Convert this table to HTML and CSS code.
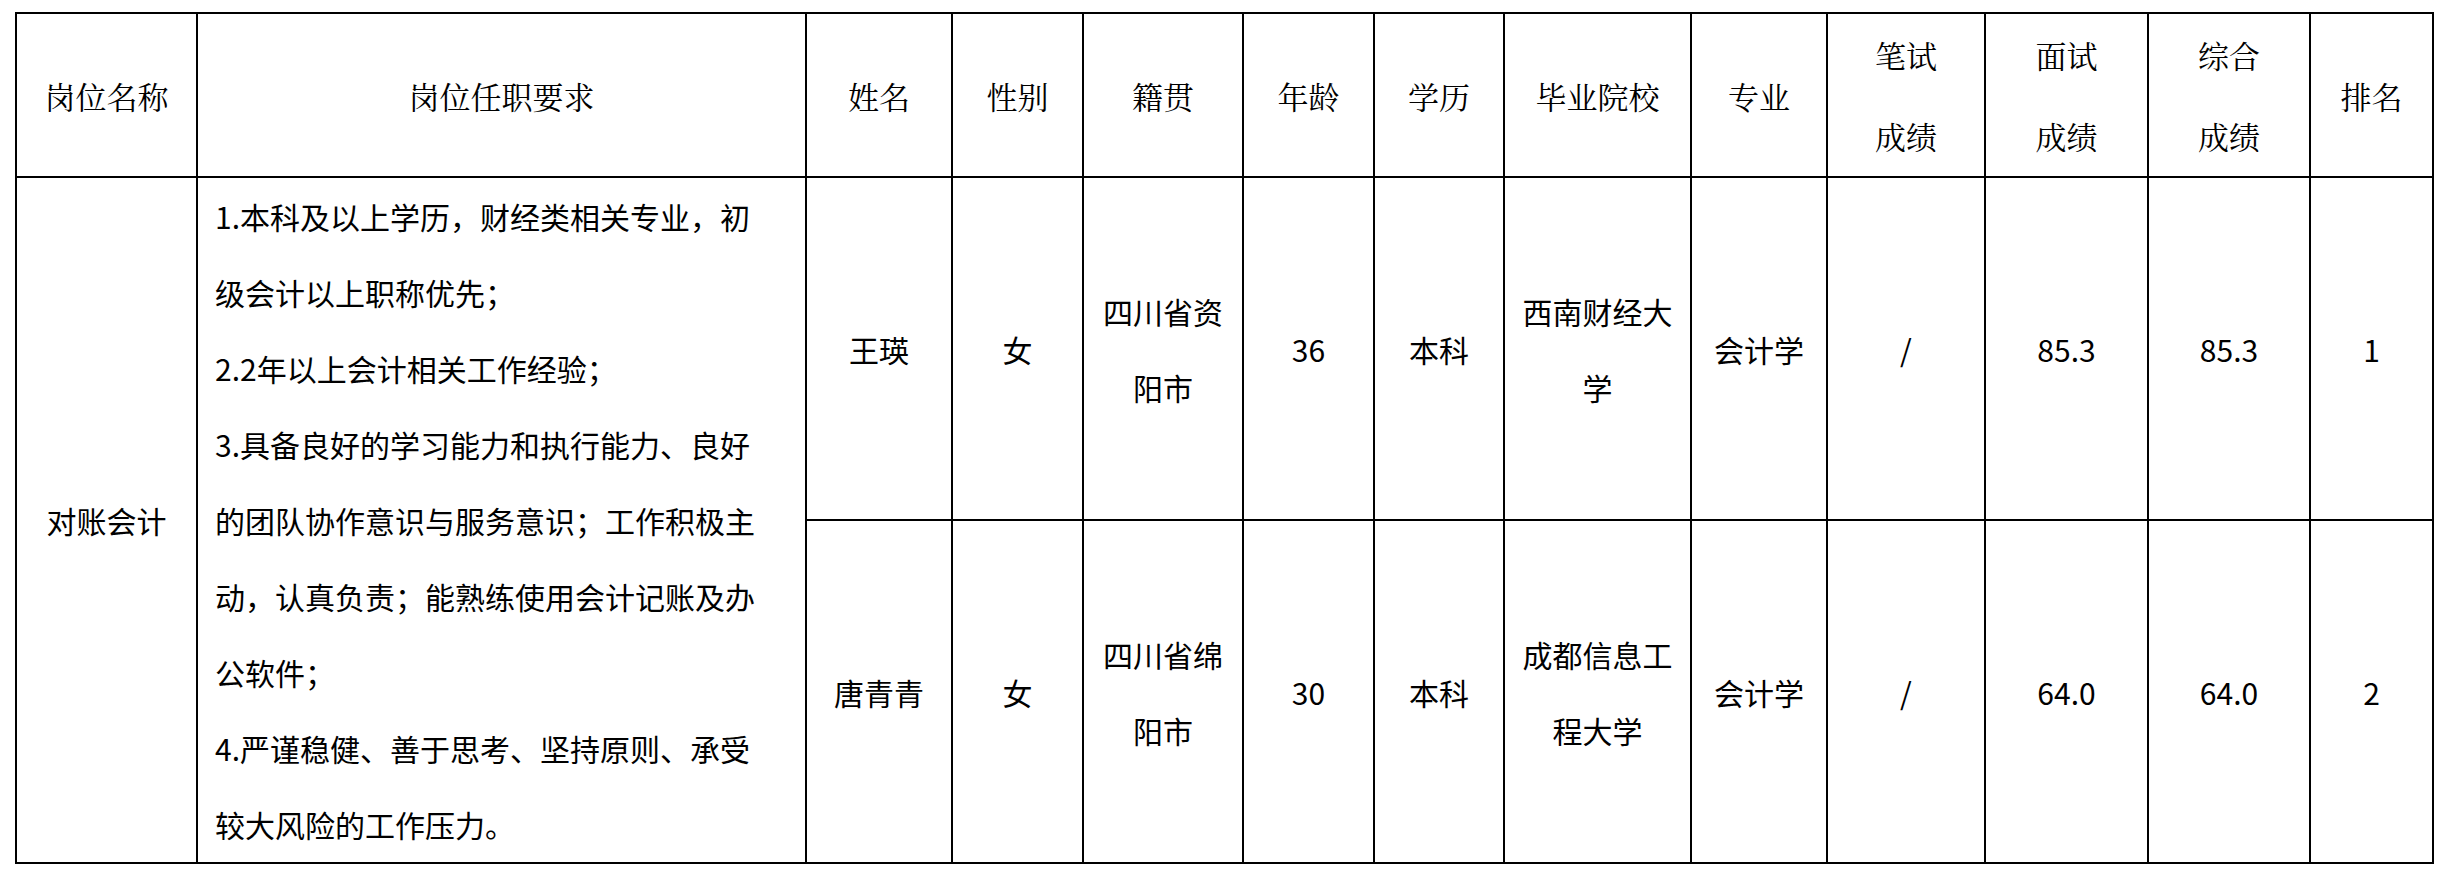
FILE: index.html
```html
<!DOCTYPE html>
<html lang="zh-CN">
<head>
<meta charset="utf-8">
<title>岗位成绩表</title>
<link rel="stylesheet" href="styles.css">
</head>
<body>
<div class="page">
<table class="grid">
  <colgroup>
    <col class="c-post">
    <col class="c-req">
    <col class="c-name">
    <col class="c-sex">
    <col class="c-origin">
    <col class="c-age">
    <col class="c-edu">
    <col class="c-school">
    <col class="c-major">
    <col class="c-written">
    <col class="c-interview">
    <col class="c-total">
    <col class="c-rank">
  </colgroup>
  <thead>
    <tr class="head-row">
      <th>岗位名称</th>
      <th>岗位任职要求</th>
      <th>姓名</th>
      <th>性别</th>
      <th>籍贯</th>
      <th>年龄</th>
      <th>学历</th>
      <th>毕业院校</th>
      <th>专业</th>
      <th>笔试<br>成绩</th>
      <th>面试<br>成绩</th>
      <th>综合<br>成绩</th>
      <th>排名</th>
    </tr>
  </thead>
  <tbody>
    <tr class="data-row">
      <td rowspan="2">对账会计</td>
      <td rowspan="2" class="req">1.本科及以上学历，财经类相关专业，初级会计以上职称优先；<br>2.2年以上会计相关工作经验；<br>3.具备良好的学习能力和执行能力、良好的团队协作意识与服务意识；工作积极主动，认真负责；能熟练使用会计记账及办公软件；<br>4.严谨稳健、善于思考、坚持原则、承受较大风险的工作压力。</td>
      <td>王瑛</td>
      <td>女</td>
      <td>四川省资阳市</td>
      <td>36</td>
      <td>本科</td>
      <td>西南财经大学</td>
      <td>会计学</td>
      <td>/</td>
      <td>85.3</td>
      <td>85.3</td>
      <td>1</td>
    </tr>
    <tr class="data-row">
      <td>唐青青</td>
      <td>女</td>
      <td>四川省绵阳市</td>
      <td>30</td>
      <td>本科</td>
      <td>成都信息工程大学</td>
      <td>会计学</td>
      <td>/</td>
      <td>64.0</td>
      <td>64.0</td>
      <td>2</td>
    </tr>
  </tbody>
</table>
</div>
</body>
</html>
```

FILE: styles.css
```css
html, body {
  margin: 0;
  padding: 0;
  background: #ffffff;
}

.page {
  padding: 12px 0 0 15px;
}

.grid {
  border-collapse: collapse;
  table-layout: fixed;
  width: 2419px;
  color: #000000;
  font-family: "Noto Sans CJK SC", "Noto Sans", sans-serif;
  font-size: 30px;
}

.c-post { width: 181px; }
.c-req { width: 609px; }
.c-name { width: 146px; }
.c-sex { width: 131px; }
.c-origin { width: 160px; }
.c-age { width: 131px; }
.c-edu { width: 130px; }
.c-school { width: 187px; }
.c-major { width: 136px; }
.c-written { width: 158px; }
.c-interview { width: 163px; }
.c-total { width: 162px; }
.c-rank { width: 123px; }

.grid th,
.grid td {
  border: 2px solid #000000;
  padding: 0 15px;
  text-align: center;
  vertical-align: middle;
}

.grid th {
  font-family: "Noto Serif CJK SC", "Noto Sans CJK SC", serif;
  font-weight: 400;
  font-size: 31px;
  line-height: 81px;
}

.grid td {
  line-height: 76px;
}

.head-row {
  height: 164px;
}

.data-row {
  height: 342px;
}

.grid td.req {
  text-align: left;
  padding: 0 30px 0 17px;
}
```
